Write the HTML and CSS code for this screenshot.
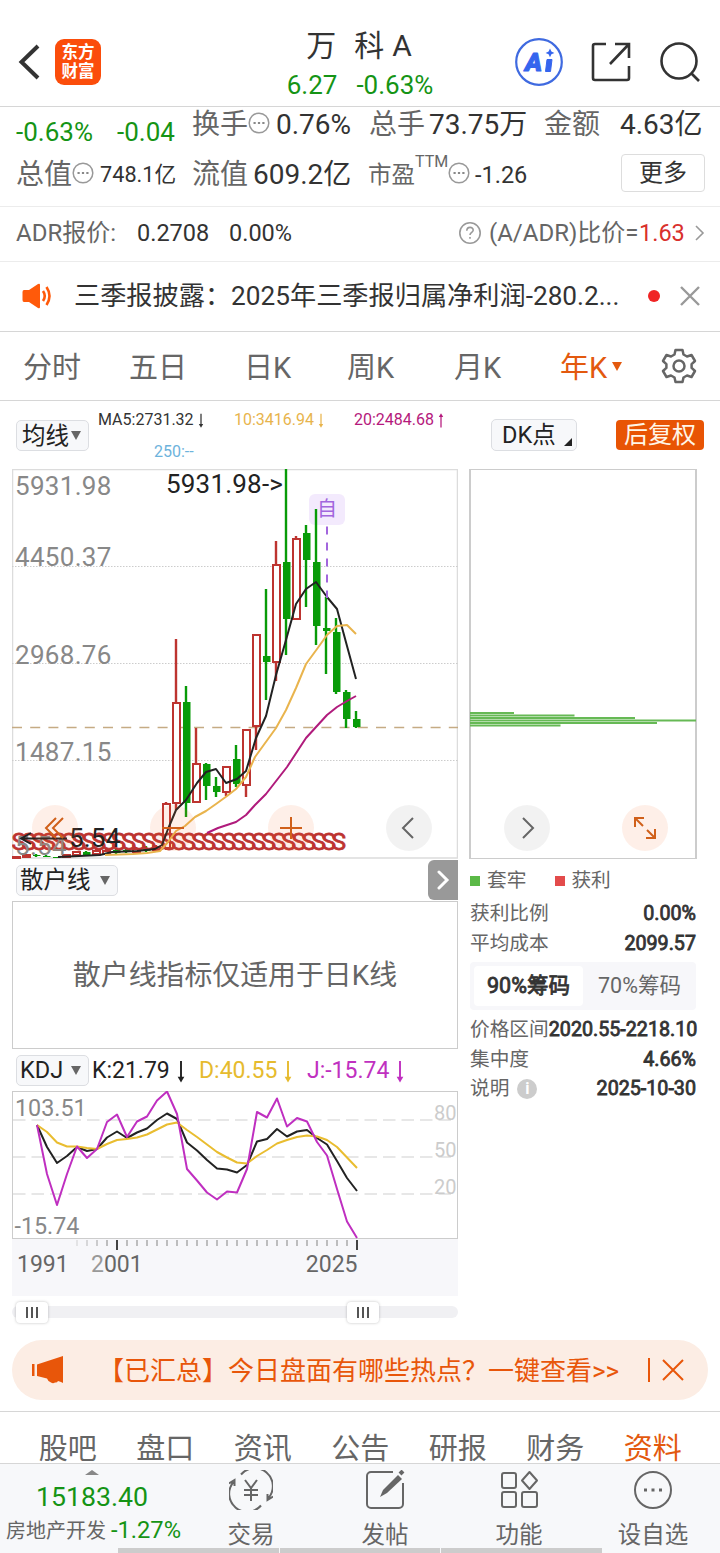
FILE: index.html
```html
<!DOCTYPE html>
<html lang="zh-CN">
<head>
  <meta charset="UTF-8" />
  <meta name="viewport" content="width=device-width, initial-scale=1.0" />
  <title>万科A 6.27</title>
  <link rel="stylesheet" href="styles.css">
</head>
<body>
  <header class="header">
    <svg class="back" width="24" height="40" viewBox="0 0 24 40"><path d="M21 4 4.500 20 21 36" fill="none" stroke="#333" stroke-width="4"/></svg>
    <div class="logo"><span>东方</span><span>财富</span></div>
    <div class="title">
      <h1>万<i></i>科<b>A</b></h1>
      <div class="title-quote"><span>6.27</span><span>-0.63%</span></div>
    </div>
    <svg class="ai" width="50" height="50" viewBox="0 0 50 50">
      <circle cx="25" cy="25" r="22.8" fill="#fff" stroke="#3f6ae0" stroke-width="2.2"/>
      <text x="11" y="34" class="ai-text">A</text>
      <path d="M33 22.500h5l-1.500 12h-5z" fill="#3565ee" stroke="#3565ee" stroke-linejoin="round"/>
      <path d="M36 11.500l1.400 3 3 1.400-3 1.400-1.400 3-1.400-3-3-1.400 3-1.400z" fill="#3565ee"/>
    </svg>
    <svg class="share" width="42" height="42" viewBox="0 0 42 42" fill="none" stroke="#333" stroke-width="2.600">
      <path d="M16 3H5a2 2 0 0 0-2 2v32a2 2 0 0 0 2 2h32a2 2 0 0 0 2-2V25"/><path d="M25 3h14v14M39 3 20 23"/>
    </svg>
    <svg class="search" width="42" height="42" viewBox="0 0 42 42" fill="none" stroke="#333" stroke-width="2.600">
      <circle cx="20" cy="20" r="17.500"/><path d="m32 32 8 8"/>
    </svg>
  </header>

  <section class="quote">
    <div class="quote-row">
      <span class="change green">-0.63%</span>
      <span class="change green">-0.04</span>
      <span class="label">换手<svg class="dots"><use href="#dots"/></svg></span>
      <span>0.76%</span>
      <span class="label">总手</span>
      <span>73.75万</span>
      <span class="label">金额</span>
      <span class="wide">4.63亿</span>
    </div>
    <div class="quote-row second">
      <span class="label">总值<svg class="dots"><use href="#dots"/></svg></span>
      <span class="small">748.1亿</span>
      <span class="label">流值</span>
      <span>609.2亿</span>
      <span class="label pe">市盈</span>
      <span class="label ttm">TTM</span>
      <svg class="dots"><use href="#dots"/></svg>
      <span class="pe">-1.26</span>
      <button class="more">更多</button>
    </div>
  </section>

  <section class="adr">
    <span class="grey">ADR报价:</span>
    <span>0.2708</span>
    <span>0.00%</span>
    <svg width="24" height="24" viewBox="0 0 24 24" fill="none" stroke="#999" stroke-width="1.6"><circle cx="12" cy="12" r="10.200"/><path d="M8.800 9.800c0-4.600 6.600-4.300 6.400-.5-.1 2-3.200 2.300-3.200 4.700M12 16v1.800"/></svg>
    <span class="grey">(A/ADR)比价=</span>
    <span class="red">1.63</span>
    <svg width="10" height="18" viewBox="0 0 10 18"><path d="m1 2 7 7-7 7" fill="none" stroke="#999" stroke-width="1.6"/></svg>
  </section>

  <section class="news">
    <svg width="32" height="28" viewBox="0 0 32 28">
      <path d="M2 8h5l9-6q2-1 2 1v22q0 2-2 1l-9-6H2q-1.500 0-1.500-2v-8q0-2 1.500-2z" fill="#ff5a0a"/>
      <path d="M21 9q3.500 5 0 10M24.500 5q6 9 0 18" fill="none" stroke="#ff5a0a" stroke-width="2.600"/>
    </svg>
    <span class="news-text">三季报披露：2025年三季报归属净利润-280.2...</span>
    <i class="dot"></i>
    <svg width="20" height="20" viewBox="0 0 20 20"><path d="m1 1 18 18m0-18L1 19" stroke="#999" stroke-width="2.400"/></svg>
  </section>

  <nav class="periods">
    <span>分时</span><span>五日</span><span>日K</span><span>周K</span><span>月K</span>
    <span class="active">年K<i class="tri"></i></span>
    <svg width="36" height="36" viewBox="0 0 36 36" fill="none" stroke="#666" stroke-width="2.500" stroke-linejoin="round">
      <path d="M14.500 2h7l1 4.500 3.500 2 4.500-1.500 3.500 6-3.400 3.100v3.800l3.400 3.100-3.500 6-4.500-1.500-3.500 2-1 4.500h-7l-1-4.500-3.500-2L5.500 29 2 23l3.400-3.100v-3.800L2 13l3.500-6L10 8.500l3.500-2z"/><circle cx="18" cy="18" r="5.500"/>
    </svg>
  </nav>

  <section class="toolbar">
    <button class="chip">均线<i class="tri"></i></button>
    <div class="ma">
      <span>MA5:2731.32<svg class="arr"><use href="#down"/></svg></span>
      <span class="ma10">10:3416.94<svg class="arr"><use href="#down"/></svg></span>
      <span class="ma20">20:2484.68<svg class="arr"><use href="#up"/></svg></span>
      <span class="ma250">250:--</span>
    </div>
    <button class="chip dk">DK点<i></i></button>
    <button class="adjust">后复权</button>
  </section>

  <main class="charts">
    <div class="left">
      <svg id="kline" width="446" height="390" viewBox="12 469 446 390"></svg>

      <div class="sub-head">
        <button class="chip">散户线<i class="tri"></i></button>
        <button class="expand"><svg width="14" height="20" viewBox="0 0 14 20"><path d="m3 2 8 8-8 8" fill="none" stroke="#fff" stroke-width="3" stroke-linecap="round"/></svg></button>
      </div>
      <div class="notice">散户线指标仅适用于日K线</div>

      <div class="sub-head kdj-head">
        <button class="chip">KDJ<i class="tri"></i></button>
        <span class="k">K:21.79<svg class="arr"><use href="#down"/></svg></span>
        <span class="d">D:40.55<svg class="arr"><use href="#down"/></svg></span>
        <span class="j">J:-15.74<svg class="arr"><use href="#down"/></svg></span>
      </div>
      <svg id="kdj" width="446" height="205" viewBox="12 1091 446 205"></svg>
      <div class="range"><i class="handle"></i><i class="handle"></i></div>
    </div>

    <aside class="chips-panel">
      <svg id="cost" width="228" height="390" viewBox="469 469 228 390"></svg>
      <div class="legend"><i class="sq"></i>套牢<i class="sq red-sq"></i>获利</div>
      <div class="stat"><span>获利比例</span><b>0.00%</b></div>
      <div class="stat"><span>平均成本</span><b>2099.57</b></div>
      <div class="switch"><b>90%筹码</b><span>70%筹码</span></div>
      <div class="stat"><span>价格区间</span><b>2020.55-2218.10</b></div>
      <div class="stat"><span>集中度</span><b>4.66%</b></div>
      <div class="stat"><span>说明<i class="info">i</i></span><b>2025-10-30</b></div>
    </aside>

    <!-- controls floating over both charts -->
    <div class="controls">
      <button class="warm"><svg viewBox="0 0 46 46"><path d="M24 13 14 23l10 10M31 13 21 23l10 10"/></svg></button>
      <button class="warm"><svg viewBox="0 0 46 46"><path d="M12 23h22"/></svg></button>
      <button class="warm"><svg viewBox="0 0 46 46"><path d="M12 23h22M23 12v22"/></svg></button>
      <button><svg viewBox="0 0 46 46"><path d="M27 13 17 23l10 10"/></svg></button>
      <button><svg viewBox="0 0 46 46"><path d="m19 13 10 10-10 10"/></svg></button>
      <button class="warm"><svg viewBox="0 0 46 46"><path d="M13 22v-9h9M13 13l8 8M33 24v9h-9M33 33l-8-8"/></svg></button>
    </div>
  </main>

  <section class="banner">
    <svg width="32" height="28" viewBox="0 0 32 28" fill="#e8560a"><path d="M0 8h2.500v12H0zM5 8.500 31 0v27l-2-1-3-1q-1 2-3 1.500-2 1.500-4 0-3-1-4-4L5 20z"/></svg>
    <span>【已汇总】今日盘面有哪些热点？一键查看&gt;&gt;</span>
    <i></i>
    <svg width="22" height="22" viewBox="0 0 22 22"><path d="m1 1 20 20m0-20L1 21" stroke="#e8560a" stroke-width="2"/></svg>
  </section>

  <nav class="info-tabs">
    <span>股吧</span><span>盘口</span><span>资讯</span><span>公告</span><span>研报</span><span>财务</span><span class="active">资料</span>
  </nav>

  <footer class="bottom">
    <div class="sector">
      <i class="caret"></i>
      <strong>15183.40</strong>
      <p>房地产开发 <em>-1.27%</em></p>
    </div>
    <div class="item">
      <svg viewBox="0 0 44 40"><path d="M12 4.500A18 18 0 0 1 39.500 28M32 35.500A18 18 0 0 1 4.500 12M0 13.500l5.500-3.500v6M44 26.500 38.500 30v-6"/><path d="m16 10 6 8 6-8M22 18v13M15 20h14M15 25h14"/></svg>
      交易
    </div>
    <div class="item">
      <svg viewBox="0 0 44 40"><path d="M30 2H8a4 4 0 0 0-4 4v28a4 4 0 0 0 4 4h28a4 4 0 0 0 4-4V13"/><path d="m17 27 3-7L35 5l4 4-15 14z" fill="#666" stroke="none"/><path d="m37 4 3-3" stroke-width="4"/></svg>
      发帖
    </div>
    <div class="item">
      <svg viewBox="0 0 44 40"><rect x="5" y="3" width="14" height="15" rx="2"/><rect x="5" y="22" width="14" height="15" rx="2"/><rect x="25" y="22" width="15" height="15" rx="2"/><path d="m32.500 2 7.500 8.500-7.500 8.500-7.500-8.500z" stroke-linejoin="round"/></svg>
      功能
    </div>
    <div class="item">
      <svg viewBox="0 0 44 40"><circle cx="22" cy="20" r="18"/><path d="M13 20h3M20.500 20h3M28 20h3" stroke-width="3"/></svg>
      设自选
    </div>
    <div class="scroll-hint"><i></i><i></i><i></i></div>
  </footer>

  <svg class="defs">
    <symbol id="dots" viewBox="0 0 22 22"><circle cx="11" cy="11" r="9.800" fill="none" stroke="#999" stroke-width="1.500"/><path d="M5.500 11h2.200M9.900 11h2.200M14.300 11h2.200" stroke="#888" stroke-width="2"/></symbol>
    <symbol id="down" viewBox="0 0 8 24"><path d="M4 1v19" stroke="currentColor" stroke-width="2"/><path d="M.5 17.500h7L4 23.500z" fill="currentColor"/></symbol>
    <symbol id="up" viewBox="0 0 8 24"><path d="M4 4v19" stroke="currentColor" stroke-width="2"/><path d="M.5 6.500h7L4 .5z" fill="currentColor"/></symbol>
  </svg>
  <script src="script.js"></script>
</body>
</html>
```

FILE: styles.css
```css
* {
  margin: 0;
  padding: 0;
  box-sizing: border-box;
}

body {
  width: 720px;
  height: 1553px;
  overflow: hidden;
  background: #fff;
  color: #333;
  font-family: Roboto, "Noto Sans CJK SC", sans-serif;
  font-size: 24px;
  line-height: 30px;
  white-space: nowrap;
}

button {
  border: none;
  background: none;
  font: inherit;
  color: inherit;
}

i, em {
  font-style: normal;
}

svg {
  display: block;
  flex: none;
}

.defs {
  display: none;
}

.green { color: #159415; }
.red { color: #d9302c; }
.grey { color: #666; }

/* Header */
.header {
  height: 107px;
  border-bottom: 1px solid #d6d6d6;
  display: grid;
  grid-template-columns: 38px 190px 264px 76px 70px 42px;
  padding: 18px 0 0 17px;
  align-items: center;
}

.logo {
  width: 46px;
  height: 46px;
  border-radius: 9px;
  background: #fb4d0b;
  color: #fff;
  font-size: 16.500px;
  font-weight: 600;
  line-height: 19px;
  display: flex;
  flex-direction: column;
  align-items: center;
  justify-content: center;
}

.title {
  text-align: center;
  padding-right: 36px;
  padding-top: 6px;
}

.title h1 {
  font-size: 30px;
  line-height: 40px;
  font-weight: 400;
}

.title h1 i {
  display: inline-block;
  width: 18px;
}

.title h1 b {
  font-weight: 400;
  margin-left: 8px;
}

.title-quote {
  color: #159415;
  font-size: 26px;
  line-height: 38px;
  display: flex;
  justify-content: center;
  gap: 19px;
  padding-left: 2px;
}

.ai-text {
  font-size: 26px;
  font-weight: 900;
  font-style: italic;
  fill: #3565ee;
  stroke: #3565ee;
  stroke-linejoin: round;
}

.ai { margin-left: 5px; }
.share { margin-left: 5px; }
.search { margin-left: 4px; }

/* Quote numbers */
.quote {
  height: 100px;
  border-bottom: 1px solid #ececec;
  padding-left: 16px;
  font-size: 28px;
}

.quote-row {
  height: 35px;
  display: grid;
  grid-template-columns: 101px 75px 84px 93px 60px 115px 76px 84px;
  grid-template-rows: 100%;
  align-items: center;
}

.quote-row.second {
  height: 65px;
  grid-template-columns: 84px 92px 61px 115px 47px 33px 27px 146px 84px;
}

.quote-row .change {
  font-size: 26px;
  margin-bottom: -15px;
}

.label {
  color: #666;
  display: flex;
  align-items: center;
}

.dots {
  width: 22px;
  height: 22px;
  margin-top: -4px;
}

.small { font-size: 21.7px; }
.pe { font-size: 23.5px; }

.ttm {
  font-size: 16px;
  padding-bottom: 26px;
}

.more {
  height: 38px;
  border: 1px solid #ddd;
  border-radius: 4px;
  font-size: 24px;
  margin-top: -4px;
}

/* ADR */
.adr {
  height: 55px;
  border-bottom: 1px solid #ececec;
  padding: 0 0 2px 16px;
  font-size: 23.5px;
  display: grid;
  grid-template-columns: 121px 92px 229px 31px 150px 56px 10px;
  align-items: center;
}

.adr .grey {
  font-size: 24px;
}

/* News */
.news {
  height: 70px;
  border-bottom: 1px solid #d6d6d6;
  padding: 0 0 1px 22px;
  display: grid;
  grid-template-columns: 52px 574px 32px 20px;
  align-items: center;
}

.news-text {
  font-size: 26.200px;
}

.dot {
  width: 12px;
  height: 12px;
  border-radius: 50%;
  background: #f02424;
}

/* Periods */
.periods {
  height: 69px;
  border-bottom: 1px solid #d6d6d6;
  padding-left: 23px;
  display: grid;
  grid-template-columns: 106px 115px 103px 107px 106px 101px 36px;
  align-items: center;
  font-size: 29px;
  color: #666;
}

.periods span {
  padding-top: 4px;
}

.active {
  color: #e3590e;
}

.tri {
  display: inline-block;
  border: 5.500px solid transparent;
  border-top: 9px solid #666;
  border-bottom: 0;
}

.periods .tri {
  border-top-color: #e3590e;
  margin: 0 0 7px 5px;
}

/* Chart toolbar */
.toolbar {
  height: 68px;
  padding-left: 16px;
  display: grid;
  grid-template-columns: 82px 393px 125px 88px;
}

.chip {
  height: 31px;
  border: 1px solid #dcdee2;
  border-radius: 5px;
  background: #f7f8fa;
  color: #222;
  display: flex;
  align-items: center;
  line-height: 28px;
}

.toolbar .chip {
  width: 73px;
  margin-top: 19px;
  padding-left: 5px;
  font-size: 23.500px;
  gap: 2px;
}

.toolbar .dk {
  width: 86px;
  height: 32px;
  margin-top: 18px;
  padding-left: 10px;
  gap: 8px;
}

.dk i {
  border: 4px solid #222;
  border-top-color: transparent;
  border-left-color: transparent;
  margin-top: 14px;
}

.ma {
  display: grid;
  grid-template-columns: 136px 120px 100px;
  grid-template-rows: 32px 32px;
  font-size: 16px;
  line-height: 20px;
  padding-top: 3px;
  align-items: center;
}

.ma span {
  display: flex;
  align-items: center;
}

.arr {
  width: 6px;
  height: 15px;
  margin-left: 4px;
}

.ma10 { color: #e8b44c; }
.ma20 { color: #b5197c; }

.ma250 {
  color: #6db3dc;
  padding-left: 56px;
}

.adjust {
  height: 30px;
  margin-top: 19px;
  border-radius: 4px;
  background: #e85404;
  color: #fff6e8;
  line-height: 30px;
}

/* Charts */
.charts {
  position: relative;
  display: grid;
  grid-template-columns: 446px 228px;
  gap: 11px;
  padding-left: 12px;
  height: 871px;
}

svg text {
  font-family: Roboto, "Noto Sans CJK SC", sans-serif;
}

.price { font-size: 26px; fill: #888; letter-spacing: .3px; }
.mark { font-size: 26px; fill: #222; letter-spacing: .2px; }
.sell { font-size: 24.500px; fill: #bd3430; stroke: #bd3430; stroke-width: .8px; }
.level { font-size: 20px; fill: #ccc; }
.kdj-value { font-size: 23.300px; fill: #888; }
.year { font-size: 23px; fill: #666; }

.sub-head {
  height: 42px;
  display: flex;
  align-items: center;
  padding-left: 4px;
}

.sub-head .chip {
  width: 102px;
  padding-left: 3px;
  gap: 9px;
  font-size: 23.500px;
}

.expand {
  width: 30px;
  height: 40px;
  border-radius: 6px 0 0 6px;
  background: #999;
  margin-left: auto;
  display: flex;
  align-items: center;
  justify-content: center;
}

.notice {
  height: 148px;
  border: 1px solid #ccc;
  padding-top: 2px;
  display: flex;
  align-items: center;
  justify-content: center;
  font-size: 27.900px;
  color: #666;
}

.kdj-head {
  font-size: 23px;
  color: #222;
}

.kdj-head .chip {
  width: 73px;
  margin-right: 3px;
  gap: 8px;
}

.kdj-head span {
  display: flex;
  align-items: center;
  padding-top: 2px;
}

.kdj-head .arr {
  width: 8px;
  height: 23px;
  margin-left: 7px;
}

.k { width: 107px; }
.d { width: 108px; color: #e6bb2e; }
.j { color: #c030c0; }

.range {
  height: 12px;
  margin-top: 10px;
  border-radius: 6px;
  background: #f0f0f3;
  display: flex;
  align-items: center;
  gap: 299px;
  padding-left: 4px;
}

.handle {
  width: 32px;
  height: 21px;
  flex: none;
  border-radius: 4px;
  background: #fff;
  box-shadow: 0 0 3px rgba(0,0,0,0.25);
  display: flex;
  align-items: center;
  justify-content: center;
}

.handle::before {
  content: "";
  width: 12px;
  height: 11px;
  background: repeating-linear-gradient(90deg, #555 0 2px, transparent 2px 5px);
}

/* Cost distribution */
.chips-panel {
  font-size: 19.700px;
  color: #666;
}

/* digits keep the regular advance width, only thicker */
.chips-panel b {
  color: #333;
  font-weight: 400;
  -webkit-text-stroke: .8px #333;
}

.legend {
  height: 40px;
  display: flex;
  align-items: center;
  padding: 3px 0 0 1px;
}

.sq {
  width: 10px;
  height: 10px;
  margin-right: 7px;
  background: #5bb947;
}

.red-sq {
  margin-left: 29px;
  margin-right: 6px;
  background: #e34b4b;
}

.stat {
  height: 29.500px;
  display: flex;
  align-items: center;
  justify-content: space-between;
  padding: 1px 1px 0;
}

.stat span {
  display: flex;
  align-items: center;
}

.switch {
  height: 48px;
  margin: 4px 1px 5px;
  padding: 4px;
  border-radius: 4px;
  background: #f7f7fa;
  display: grid;
  grid-template-columns: 109px 1fr;
  align-items: center;
  text-align: center;
  font-size: 21.500px;
}

.switch b {
  background: #fff;
  border-radius: 4px;
  line-height: 40px;
}

.switch span {
  padding-left: 4px;
}

.info {
  width: 20px;
  height: 20px;
  margin-left: 8px;
  border-radius: 50%;
  background: #ccc;
  color: #fff;
  font-size: 16px;
  font-weight: 700;
  line-height: 20px;
  text-align: center;
}

.controls {
  position: absolute;
  left: 32px;
  top: 336px;
  display: flex;
  gap: 72px;
}

.controls button {
  width: 46px;
  height: 46px;
  border-radius: 50%;
  background: rgba(0,0,0,0.05);
}

.controls .warm {
  background: rgba(250,110,50,0.11);
}

.controls path {
  fill: none;
  stroke: #666;
  stroke-width: 2;
}

.controls .warm path {
  stroke: #d0601a;
}

/* Banner */
.banner {
  height: 60px;
  margin: 0 12px 11px;
  border-radius: 30px;
  background: #fcede4;
  color: #e8560a;
  font-size: 26px;
  padding-left: 20px;
  display: grid;
  grid-template-columns: 66px 550px 14px 22px;
  align-items: center;
}

.banner span {
  padding-top: 2px;
}

.banner i {
  width: 1.500px;
  height: 24px;
  background: #e8560a;
}

/* Info tabs */
.info-tabs {
  height: 53px;
  border-top: 1px solid #d6d6d6;
  border-bottom: 1px solid #d6d6d6;
  padding: 22px 19px 0;
  display: grid;
  grid-template-columns: repeat(7, 97.500px);
  text-align: center;
  font-size: 29px;
  color: #666;
  overflow: hidden;
}

/* Bottom bar */
.bottom {
  position: relative;
  height: 89px;
  background: #f7f8fa;
  color: #666;
  display: grid;
  grid-template-columns: 184px repeat(4, 134px);
}

.sector {
  display: flex;
  flex-direction: column;
  align-items: center;
  padding-top: 6px;
}

.caret {
  border: 7px solid transparent;
  border-bottom: 5px solid #888;
  border-top: 0;
}

.sector strong {
  font-size: 26.700px;
  font-weight: 400;
  line-height: 34px;
  margin-top: 5px;
  color: #159415;
}

.sector p {
  font-size: 20px;
  line-height: 32px;
  padding-left: 3px;
}

.sector em {
  color: #159415;
  font-size: 23.700px;
}

.item {
  display: flex;
  flex-direction: column;
  align-items: center;
  padding-top: 6px;
  font-size: 23.500px;
}

.item svg {
  width: 44px;
  height: 40px;
  margin-bottom: 10px;
  fill: none;
  stroke: #666;
  stroke-width: 2;
}

.scroll-hint {
  position: absolute;
  left: 118px;
  bottom: 0;
  display: flex;
  gap: 1px;
}

.scroll-hint i {
  width: 160.500px;
  height: 5px;
  background: #ccc;
}
```

FILE: script.js
```js
/* ─── K line ──────────────────────────────── */
// [index from 1991, high, open/close top, open/close bottom, low, up?]
const candles = [
  [0, 857, 857, 858, 858, 1], [1, 855, 855, 857, 858, 1], [2, 854, 855, 856, 857, 0],
  [3, 855, 856, 857, 857, 0], [4, 857, 857, 858, 858, 0], [5, 854, 855, 857, 858, 1],
  [6, 851, 852, 855, 855, 1], [7, 851, 852, 855, 856, 0], [8, 849, 851, 854, 855, 1],
  [9, 849, 851, 854, 855, 1], [10, 849, 850, 853, 854, 0], [11, 848, 850, 852, 853, 0],
  [12, 847, 849, 852, 853, 1], [13, 846, 849, 851, 852, 0], [14, 845, 847, 850, 851, 1],
  [15, 802, 804, 848, 850, 1], [16, 639, 703, 803, 810, 1], [17, 686, 702, 803, 817, 0],
  [18, 728, 764, 802, 803, 1], [19, 763, 764, 786, 800, 0], [20, 777, 786, 792, 797, 0],
  [21, 766, 767, 792, 796, 1], [22, 745, 759, 784, 787, 0], [23, 729, 730, 785, 797, 1],
  [24, 634, 635, 726, 750, 1], [25, 589, 656, 662, 700, 0], [26, 541, 565, 662, 681, 1],
  [27, 469, 562, 619, 655, 0], [28, 536, 539, 619, 620, 1], [29, 525, 533, 560, 607, 0],
  [30, 509, 562, 626, 645, 0], [31, 597, 628, 631, 674, 0], [32, 618, 632, 692, 694, 0],
  [33, 690, 692, 719, 728, 0], [34, 711, 719, 727, 728, 0],
];

const ma5 = '58,857 100,855 112,852 137,851 155,849 162,845 168,829 176,810 186,800 197,783 206,772 216,769 226,783 237,779 246,771 256,738 266,716 276,675 286,640 296,604 306,589 316,582 327,597 337,609 347,646 356,679';
const ma10 = '105,855 133,854 147,853 160,851 168,842 176,831 185,826 195,817 206,811 216,804 227,796 236,789 246,777 255,757 276,728 286,710 296,688 306,664 317,649 327,635 337,626 347,625 356,634';
const ma20 = '207,833 218,828 236,822 246,815 255,805 266,794 280,776 287,767 306,738 327,715 337,707 347,701 356,696';

function line(points, color, width = 2) {
  return `<polyline points="${points}" fill="none" stroke="${color}" stroke-width="${width}" stroke-linejoin="round"/>`;
}

function drawKline() {
  let s = '<path d="M12 469.500H458M12 858H458M12.500 469V858M457.500 469V858" stroke="#dcdcdc" stroke-width="1.5"/>';
  [566.5, 663.5, 760.5].forEach(y => {
    s += `<path d="M12 ${y}H458" stroke="#ccc" stroke-dasharray="1.500 1.500"/>`;
  });
  s += '<path d="M12 727.500H458" stroke="#c5ab84" stroke-width="1.300" stroke-dasharray="10 8.200"/>';
  [['5931.98', 495], ['4450.37', 566], ['2968.76', 664], ['1487.15', 761]].forEach(([t, y]) => {
    s += `<text class="price" x="15" y="${y}">${t}</text>`;
  });
  s += '<rect x="309" y="494" width="36" height="31" rx="6" fill="#f3eafd"/>';
  candles.forEach(([i, high, top, bottom, low, up]) => {
    const x = 16 + i * 10;
    const color = up ? '#bd3430' : '#089b08';
    s += `<path d="M${x} ${high}V${up ? top : low}${up ? `M${x} ${bottom}V${low}` : ''}" stroke="${color}" stroke-width="2.400"/>`;
    s += up
      ? `<rect x="${x - 3}" y="${top}" width="7" height="${bottom - top}" fill="#fff" stroke="${color}" stroke-width="2"/>`
      : `<rect x="${x - 3}" y="${top}" width="7.500" height="${bottom - top}" fill="${color}"/>`;
  });
  for (let i = 0; i < 33; i++) {
    s += `<text class="sell" x="${11.5 + i * 10}" y="850">S</text>`;
  }
  s += line(ma5, '#222') + line(ma10, '#e9b44d') + line(ma20, '#b01b7c');
  s += '<text class="price" x="15" y="855">5.54</text>';
  s += '<text class="mark" x="166" y="493">5931.98-&gt;</text>';
  s += '<path d="M31 833 21 838.500 31 844M21 838.500H67" fill="none" stroke="#222" stroke-width="1.800"/>';
  s += '<text class="mark" x="69" y="847">5.54</text>';
  s += '<text x="317" y="516" font-size="20" fill="#a266dd">自</text>';
  s += '<path d="M327 526.500V598" stroke="#a266dd" stroke-width="2" stroke-dasharray="8 8"/>';
  document.getElementById('kline').innerHTML = s;
}

/* ─── KDJ ─────────────────────────────────── */
// pixel offsets below the top of the pane, one per year
const k = [76, 98, 114, 107, 98, 102, 100, 88.5, 82.5, 89, 83.5, 79.5, 71, 64.5, 70, 93.5, 101.5, 111, 119.5, 120.5, 123.5, 116, 92.5, 90, 80, 87.5, 82.5, 81, 89, 95.5, 112, 129, 142];
const d = [76, 83, 93.5, 97.5, 97.5, 99, 100, 95, 91, 90, 88.5, 85.5, 80.5, 75.5, 73.5, 81, 88, 95.5, 103, 108.5, 113.5, 114.5, 107, 101, 94.5, 91, 88, 86.5, 87.5, 91, 98, 108.5, 119];
const j = [76, 125, 156, 125, 97.5, 109, 100, 73, 65.5, 88, 72.5, 67.5, 51.5, 42.5, 65, 120, 131.5, 143.5, 150.5, 142.5, 143.5, 120, 63, 68.5, 49.5, 77.5, 69, 72.5, 93, 106.5, 140, 172.5, 189];

function drawKdj() {
  const pts = a => a.map((v, i) => `${37 + i * 10},${v + 1049}`).join(' ');
  let s = '<rect x="12" y="1239" width="446" height="57" fill="#f7f7fa"/>';
  s += '<rect x="12.500" y="1091.500" width="445" height="147" fill="none" stroke="#ccc"/>';
  [[80, 1120], [50, 1157], [20, 1194]].forEach(([v, y]) => {
    s += `<path d="M13 ${y}H457" stroke="#e0e0e0" stroke-width="1.500" stroke-dasharray="12.500 6"/>`;
    s += `<text class="level" x="456.500" y="${y}" text-anchor="end">${v}</text>`;
  });
  s += '<text class="kdj-value" x="15" y="1116">103.51</text><text class="kdj-value" x="14.500" y="1234">-15.74</text>';
  s += line(pts(k), '#222') + line(pts(d), '#e9bd30') + line(pts(j), '#bf2fc0');
  for (let x = 77; x <= 357; x += 10) {
    const major = x === 117 || x === 357;
    s += `<path d="M${x} 1240v${major ? 10 : 6}" stroke="${major ? '#444' : '#aaa'}" stroke-width="${major ? 2 : 1.5}" opacity="${x < 107 ? (x - 60) / 50 : 1}"/>`;
  }
  s += '<text class="year" x="17" y="1272">1991</text>';
  s += '<text class="year" x="91" y="1272"><tspan fill="#999">2</tspan>001</text>';
  s += '<text class="year" x="357.500" y="1272" text-anchor="end">2025</text>';
  document.getElementById('kdj').innerHTML = s;
}

/* ─── cost distribution ───────────────────── */
function drawCost() {
  const bars = [[713, 514], [715.5, 574.5], [718, 635], [720.5, 696], [723, 657], [725.5, 560.5]];
  let s = '<path d="M469 469.500H697M469 858.500H697" stroke="#ccc"/><path d="M470 469V859M696 469V859" stroke="#ccc" stroke-width="2"/>';
  bars.forEach(([y, x]) => {
    s += `<path d="M470 ${y}H${x}" stroke="#66b955" stroke-width="1.900"/>`;
  });
  document.getElementById('cost').innerHTML = s;
}

drawKline();
drawKdj();
drawCost();
```
